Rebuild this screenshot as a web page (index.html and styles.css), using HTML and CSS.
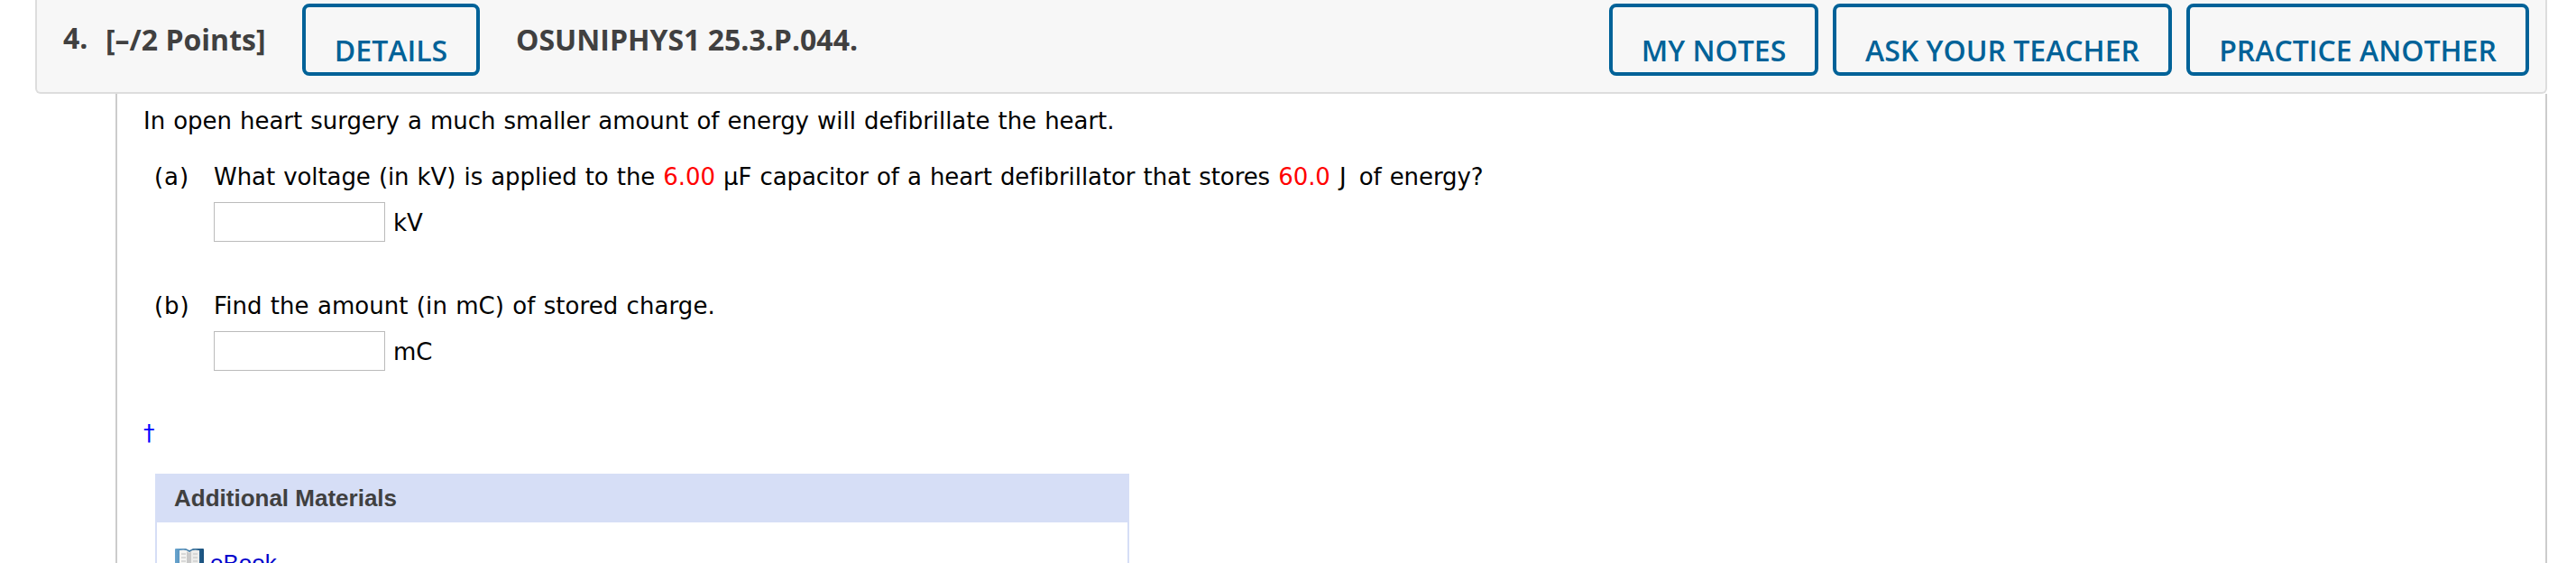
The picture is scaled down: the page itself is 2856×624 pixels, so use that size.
FILE: index.html
```
<!DOCTYPE html>
<html lang="en">
<head>
<meta charset="UTF-8">
<title>OSUNIPHYS1 25.3.P.044.</title>
<link rel="stylesheet" href="styles.css">
</head>
<body>
<div class="question">
  <div class="header">
    <span class="number">4.</span>
    <span class="points">[–/2 Points]</span>
    <a class="button details">DETAILS</a>
    <span class="name">OSUNIPHYS1 25.3.P.044.</span>
    <div class="actions">
      <a class="button notes">MY NOTES</a>
      <a class="button ask">ASK YOUR TEACHER</a>
      <a class="button practice">PRACTICE ANOTHER</a>
    </div>
  </div>

  <div class="content">
    <p class="intro">In open heart surgery a much smaller amount of energy will defibrillate the heart.</p>

    <div class="part">
      <span class="letter">(a)</span>
      <div class="part-body">
        <p class="text">What voltage (in kV) is applied to the <span class="value">6.00</span> µF capacitor of a heart defibrillator that stores <span class="value">60.0</span> <span class="unit">J</span> of energy?</p>
        <label class="answer"><input type="text"><span>kV</span></label>
      </div>
    </div>

    <div class="part">
      <span class="letter">(b)</span>
      <div class="part-body">
        <p class="text short">Find the amount (in mC) of stored charge.</p>
        <label class="answer"><input type="text"><span>mC</span></label>
      </div>
    </div>

    <a class="footnote">†</a>

    <div class="materials">
      <h3>Additional Materials</h3>
      <a class="ebook">
        <svg class="book" viewBox="0 0 32 32" width="32" height="32">
          <defs>
            <linearGradient id="cover" x1="0" x2="1" y1="0" y2="0">
              <stop offset="0" stop-color="#69a5cf"/>
              <stop offset="1" stop-color="#174f7c"/>
            </linearGradient>
          </defs>
          <path d="M0 3q0-1 1-1h11l4 2 4-2h11q1 0 1 1v27H0z" fill="url(#cover)"/>
          <path d="M5 4c4-1 8-1 11 2v24c-3-2-7-3-11-2z" fill="#f4f4f2"/>
          <path d="M27 4c-4-1-8-1-11 2v24c3-2 7-3 11-2z" fill="#ececea"/>
          <path d="M13 5l3 2 2-2v24h-5z" fill="#c9c9c9"/>
          <path d="M7 8h5M7 12h5M7 16h5M7 20h5M20 8h5M20 12h5M20 16h5M20 20h5" stroke="#cfcfcf" stroke-width="1.5"/>
        </svg>
        <span>eBook</span>
      </a>
    </div>
  </div>
</div>
</body>
</html>
```

FILE: styles.css
```
* {
  box-sizing: border-box;
}

body {
  margin: 0;
  height: 624px;
  overflow: hidden;
  background: #fff;
  font-family: Verdana, "DejaVu Sans", sans-serif;
  font-size: 26px;
  color: #000;
}

p, h3 {
  margin: 0;
}

.question {
  width: 2785px;
  margin-left: 39px;
}

.header {
  display: flex;
  align-items: flex-start;
  height: 104px;
  padding: 4px 18px 0 29px;
  background: #f7f7f7;
  border: 2px solid #ddd;
  border-top: none;
  border-radius: 0 0 6px 6px;
  font-family: "Open Sans", sans-serif;
  font-size: 32px;
  line-height: 44px;
  font-weight: 700;
  color: #404040;
  white-space: nowrap;
}

.number {
  width: 47px;
  padding-top: 16px;
}

.points {
  width: 218px;
  padding-top: 18px;
}

.name {
  margin-left: 40px;
  padding-top: 18px;
}

.actions {
  display: flex;
  gap: 16px;
  margin-left: auto;
}

.button {
  height: 80px;
  padding-top: 26px;
  border: 4px solid #006298;
  border-radius: 8px;
  color: #006298;
  font-weight: 600;
  text-align: center;
}

.details {
  width: 197px;
}

.notes {
  width: 232px;
}

.ask {
  width: 376px;
}

.practice {
  width: 380px;
}

.content {
  height: 520px;
  margin-left: 89px;
  padding: 14px 0 0 29px;
  border-left: 2px solid #ccc;
  border-right: 2px solid #ccc;
  overflow: hidden;
  font-variant-ligatures: none;
  word-spacing: 0.9px;
}

.intro {
  height: 62px;
  line-height: 32px;
  letter-spacing: -0.04px;
}

.part {
  display: flex;
  height: 143px;
  padding-left: 12px;
  line-height: 32px;
}

.letter {
  width: 66px;
  letter-spacing: 0.9px;
}

.text {
  height: 44px;
  white-space: nowrap;
  letter-spacing: -0.07px;
}

.short {
  letter-spacing: 0.07px;
}

.unit {
  margin: 0 5px 0 1px;
}

.answer {
  display: flex;
  align-items: center;
  gap: 9px;
}

.answer input {
  width: 190px;
  height: 44px;
  margin: 0;
  border: 1px solid #bbb;
  background: #fff;
}

.answer span {
  padding-top: 2px;
}

.value {
  color: #f00;
}

.footnote {
  display: block;
  height: 59px;
  color: #00f;
  font-size: 25px;
  line-height: 28px;
}

.materials {
  width: 1080px;
  height: 150px;
  margin-left: 13px;
  border: 2px solid #d6def6;
  border-top: none;
  font-family: "Liberation Sans", Arial, sans-serif;
  word-spacing: 0;
}

.materials h3 {
  height: 54px;
  padding-left: 19px;
  background: #d6def6;
  color: #404040;
  font-size: 26px;
  line-height: 54px;
}

.ebook {
  display: flex;
  gap: 7px;
  padding: 27px 0 0 20px;
  color: #00c;
  line-height: 36px;
}
```
